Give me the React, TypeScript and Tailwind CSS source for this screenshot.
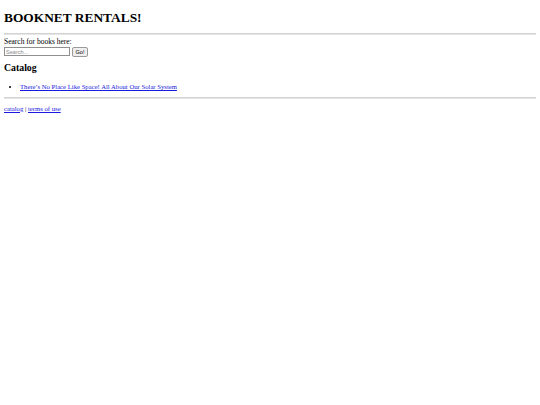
export default function App() {
  return (
    <div className="min-h-screen bg-white px-[4px] font-['Liberation_Serif',serif] text-black">
      <h1 className="pt-[10px] pb-[8px] text-[13.4px] font-bold leading-[15px]">BOOKNET RENTALS!</h1>

      <div className="h-[2px] border-t border-t-[#d2d2d2] border-b border-b-[#e6e6e6]" />

      <form className="pt-[3px]" onSubmit={(e) => e.preventDefault()}>
        <label className="block text-[7.5px] leading-[8.5px]">Search for books here:</label>
        <div className="flex items-center gap-[2px]">
          <input
            type="text"
            placeholder="Search..."
            className="h-[9px] w-[66px] border border-[#8f8f8f] bg-white px-[1px] font-['Liberation_Sans',sans-serif] text-[5.6px] leading-[7px] placeholder:text-[#8a8a8a] outline-none"
          />
          <button
            type="submit"
            className="h-[10px] w-[16px] rounded-[2px] border border-[#9a9a9a] bg-[#efefef] font-['Liberation_Sans',sans-serif] text-[5.6px] leading-[8px] text-black"
          >
            Go!
          </button>
        </div>
      </form>

      <h2 className="pt-[5px] pb-[10px] text-[9.8px] font-bold leading-[11.5px]">Catalog</h2>

      <ul className="list-disc pl-[16px] text-[6.7px] leading-[7.7px]">
        <li>
          <a href="#" className="text-[#1a1ae0] underline">
            There&#8217;s No Place Like Space! All About Our Solar System
          </a>
        </li>
      </ul>

      <div className="mt-[6px] h-[2px] border-t border-t-[#d2d2d2] border-b border-b-[#e6e6e6]" />

      <p className="pt-[6px] text-[6.7px] leading-[7.7px]">
        <a href="#" className="text-[#1a1ae0] underline">catalog</a> |{" "}
        <a href="#" className="text-[#1a1ae0] underline">terms of use</a>
      </p>
    </div>
  )
}
